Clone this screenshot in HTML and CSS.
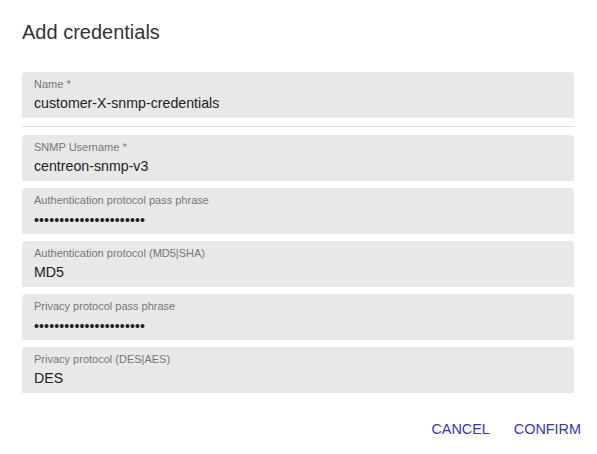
FILE: index.html
```html
<!DOCTYPE html>
<html lang="en">

<head>
    <meta charset="UTF-8">
    <title>Add credentials</title>
    <link rel="stylesheet" href="styles.css">
</head>

<body>
    <div class="dialog">
        <h2 class="dialog-title">Add credentials</h2>

        <div class="dialog-content">
            <div class="field">
                <label>Name *</label>
                <div class="value">customer-X-snmp-credentials</div>
            </div>

            <hr class="divider">

            <div class="field-list">
                <div class="field">
                    <label>SNMP Username *</label>
                    <div class="value">centreon-snmp-v3</div>
                </div>
                <div class="field">
                    <label>Authentication protocol pass phrase</label>
                    <div class="value secret">&bull;&bull;&bull;&bull;&bull;&bull;&bull;&bull;&bull;&bull;&bull;&bull;&bull;&bull;&bull;&bull;&bull;&bull;&bull;&bull;&bull;&bull;</div>
                </div>
                <div class="field">
                    <label>Authentication protocol (MD5|SHA)</label>
                    <div class="value">MD5</div>
                </div>
                <div class="field">
                    <label>Privacy protocol pass phrase</label>
                    <div class="value secret">&bull;&bull;&bull;&bull;&bull;&bull;&bull;&bull;&bull;&bull;&bull;&bull;&bull;&bull;&bull;&bull;&bull;&bull;&bull;&bull;&bull;&bull;</div>
                </div>
                <div class="field">
                    <label>Privacy protocol (DES|AES)</label>
                    <div class="value">DES</div>
                </div>
            </div>
        </div>

        <div class="dialog-actions">
            <button>Cancel</button>
            <button>Confirm</button>
        </div>
    </div>
</body>

</html>
```

FILE: styles.css
```css
body {
    margin: 0;
    padding: 0;
    background: #fff;
    font-family: 'Liberation Sans', Arial, sans-serif;
    color: #222;
}

.dialog {
    width: 597px;
    height: 454px;
    box-sizing: border-box;
    padding: 0 23px 0 22px;
}

.dialog-title {
    margin: 0;
    padding-top: 21px;
    height: 72px;
    box-sizing: border-box;
    font-size: 20px;
    font-weight: normal;
    line-height: 23px;
    color: #333;
}

.field {
    height: 46px;
    box-sizing: border-box;
    padding: 6px 12px 0;
    background: #e8e8e8;
    border-radius: 4px 4px 0 0;
}

.field label {
    display: block;
    font-size: 11px;
    line-height: 13px;
    color: #777;
}

.field .value {
    font-size: 14.2px;
    line-height: 17px;
    margin-top: 4px;
    color: #222;
}

.field .secret {
    font-size: 14px;
    letter-spacing: 0.15px;
    margin-top: 5px;
}

.divider {
    margin: 8px 0;
    border: none;
    border-top: 1px solid #ddd;
}

.field-list {
    display: flex;
    flex-direction: column;
    gap: 7px;
}

.dialog-actions {
    display: flex;
    justify-content: flex-end;
    gap: 8px;
    margin-top: 22px;
    margin-right: -15px;
}

.dialog-actions button {
    background: none;
    border: none;
    padding: 6px 8px;
    font-family: inherit;
    font-size: 14.4px;
    text-transform: uppercase;
    color: #3535b8;
    cursor: pointer;
}
```
